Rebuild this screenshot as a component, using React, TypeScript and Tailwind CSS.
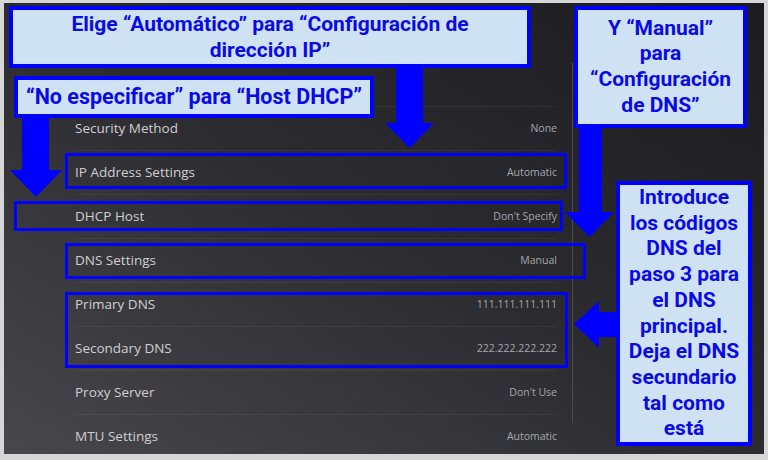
import React from 'react'

type Row = { label: string; value: string }

const rows: Row[] = [
	{ label: 'Security Method', value: 'None' },
	{ label: 'IP Address Settings', value: 'Automatic' },
	{ label: 'DHCP Host', value: "Don't Specify" },
	{ label: 'DNS Settings', value: 'Manual' },
	{ label: 'Primary DNS', value: '111.111.111.111' },
	{ label: 'Secondary DNS', value: '222.222.222.222' },
	{ label: 'Proxy Server', value: "Don't Use" },
	{ label: 'MTU Settings', value: 'Automatic' },
]

const calloutText =
	"font-['Roboto',sans-serif] font-bold text-[#0a0ae6] text-center"

function SettingsRow({ label, value }: Row) {
	return (
		<li className="flex h-[44px] items-center justify-between border-t border-white/[0.06]">
			<span className="text-[13.5px] text-[#cfcfd2]">{label}</span>
			<span className="text-[10.5px] text-[#a6a6ab]">{value}</span>
		</li>
	)
}

function Arrows() {
	return (
		<svg
			className="pointer-events-none absolute inset-0"
			width={768}
			height={460}
			viewBox="0 0 768 460"
			aria-hidden="true"
		>
			<g fill="#0000ff">
				<polygon points="22,116 49,116 49,170 62,170 36,197 10,170 22,170" />
				<polygon points="396,66 423,66 423,123 434,123 409.5,148 385,123 396,123" />
				<polygon points="579,126 602,126 602,212 614,212 589.5,237 565,212 579,212" />
				<polygon points="574,324 599,301 599,312 618,312 618,337 599,337 599,348" />
			</g>
		</svg>
	)
}

export default function App() {
	return (
		<div className="relative h-[460px] w-[768px] overflow-hidden bg-[#d6d6d6] pt-[3px] pr-[4px] pb-[6px] pl-[4px]">
			<div className="flex h-full w-full overflow-hidden bg-linear-to-tr from-[#48484c] via-[#2b2b30] to-[#1b1b20] font-['Open_Sans',sans-serif]">
				<ul className="ml-[71px] mt-[103px] w-[482px] shrink-0">
					{rows.map((row) => (
						<SettingsRow key={row.label} {...row} />
					))}
				</ul>
				<div className="ml-[15px] mt-[60px] h-[360px] w-px bg-[#4a4a50]" />
			</div>

			{/* row highlights */}
			<div className="absolute left-[65px] top-[153px] h-[36px] w-[502px] border-[3px] border-[#0000ff]" />
			<div className="absolute left-[14px] top-[201px] h-[30px] w-[549px] border-[3px] border-[#0000ff]" />
			<div className="absolute left-[65px] top-[243px] h-[36px] w-[521px] border-[3px] border-[#0000ff]" />
			<div className="absolute left-[65px] top-[292px] h-[76px] w-[503px] border-[3px] border-[#0000ff]" />

			<Arrows />

			{/* callouts */}
			<div
				className={`absolute left-[9px] top-[6px] flex h-[62px] w-[522px] flex-col justify-center border-4 border-[#0000ff] bg-[#cfe2f3] text-[21px] leading-[26px] ${calloutText}`}
			>
				<p>Elige “Automático” para “Configuración de</p>
				<p>dirección IP”</p>
			</div>
			<div
				className={`absolute left-[14px] top-[76px] flex h-[42px] w-[360px] items-center justify-center border-4 border-[#0000ff] bg-[#cfe2f3] text-[21.5px] ${calloutText}`}
			>
				“No especificar” para “Host DHCP”
			</div>
			<div
				className={`absolute left-[574px] top-[6px] flex h-[122px] w-[173px] flex-col justify-center border-4 border-[#0000ff] bg-[#cfe2f3] text-[21px] leading-[25.7px] ${calloutText}`}
			>
				<p>Y “Manual”</p>
				<p>para</p>
				<p>“Configuración</p>
				<p>de DNS”</p>
			</div>
			<div
				className={`absolute left-[616px] top-[181px] flex h-[265px] w-[136px] flex-col justify-center border-4 border-[#0000ff] bg-[#cfe2f3] text-[21px] leading-[25.7px] ${calloutText}`}
			>
				<p>Introduce</p>
				<p>los códigos</p>
				<p>DNS del</p>
				<p>paso 3 para</p>
				<p>el DNS</p>
				<p>principal.</p>
				<p>Deja el DNS</p>
				<p>secundario</p>
				<p>tal como</p>
				<p>está</p>
			</div>
		</div>
	)
}
